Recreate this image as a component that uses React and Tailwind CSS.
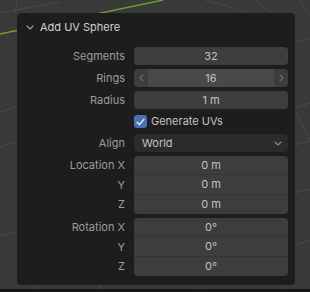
import { useState } from 'react'

const font = { fontFamily: 'Inter, "DejaVu Sans", sans-serif' }

function Chevron({ dir = 'down', className = '' }) {
  const d = {
    down: 'M1 1 L4 4 L7 1',
    left: 'M4 1 L1 4 L4 7',
    right: 'M1 1 L4 4 L1 7',
  }[dir]
  const size = dir === 'down' ? { w: 8, h: 5 } : { w: 5, h: 8 }
  return (
    <svg width={size.w} height={size.h} viewBox={`0 0 ${size.w} ${size.h}`} className={className}>
      <path d={d} fill="none" stroke="currentColor" strokeWidth="1.1" strokeLinecap="round" strokeLinejoin="round" />
    </svg>
  )
}

function Row({ label, children }) {
  return (
    <div className="grid grid-cols-[108px_1fr] items-center gap-[9px]">
      <span className="text-right text-[11px] text-[#9c9c9c]">{label}</span>
      {children}
    </div>
  )
}

function NumField({ value }) {
  return (
    <div className="flex h-[18px] items-center justify-center rounded-[4px] bg-[#3d3d3d] text-[11px] text-[#c2c2c2]">
      {value}
    </div>
  )
}

function Viewport() {
  const grid = [
    [0, 13, 60, 2],
    [17, 0, 15, 13],
    [0, 112, 17, 107],
    [0, 147, 17, 142],
    [0, 236, 17, 231],
    [205, 0, 250, 13],
    [255, 0, 272, 13],
    [300, 0, 310, 15],
    [295, 42, 310, 38],
    [295, 108, 310, 103],
    [296, 113, 310, 140],
    [295, 145, 310, 141],
    [295, 193, 310, 189],
    [295, 245, 310, 240],
    [38, 285, 38, 289],
    [100, 285, 100, 289],
    [200, 285, 200, 289],
    [285, 285, 285, 289],
  ]
  return (
    <svg className="absolute inset-0" width="310" height="292" viewBox="0 0 310 292">
      {grid.map(([x1, y1, x2, y2], i) => (
        <line key={i} x1={x1} y1={y1} x2={x2} y2={y2} stroke="#4a4a4a" strokeWidth="1" />
      ))}
      <line x1="0" y1="34" x2="163" y2="0" stroke="#6f9f2c" strokeWidth="1.3" />
      <rect x="0" y="289" width="310" height="3" fill="#171717" />
    </svg>
  )
}

function Stack({ labels, values }) {
  const heights = ['h-[19px]', 'h-[20px]', 'h-[19px]']
  return (
    <div className="grid grid-cols-[108px_1fr] gap-x-[9px]">
      <div className="flex flex-col text-[11px] text-[#9c9c9c]">
        {labels.map((l, i) => (
          <span key={l} className={`flex items-center justify-end ${heights[i]}`}>{l}</span>
        ))}
      </div>
      <div className="flex flex-col divide-y divide-[#343434] overflow-hidden rounded-[4px] bg-[#3d3d3d] text-[11px] text-[#c2c2c2]">
        {values.map((v, i) => (
          <span key={i} className={`flex items-center justify-center ${heights[i]}`}>{v}</span>
        ))}
      </div>
    </div>
  )
}

export default function App() {
  const [uvs, setUvs] = useState(true)

  return (
    <div className="relative h-[292px] w-[310px] overflow-hidden bg-[#393939]" style={font}>
      <Viewport />
      <div className="relative pl-[17px] pt-[13px]">
        <div className="h-[272px] w-[278px] rounded-[4px] bg-[#1d1d1d] pr-[7px]">
          <div className="flex h-[27px] items-center gap-[6px] pl-[9px] pt-[1px] text-[11px] text-[#d2d2d2]">
            <Chevron dir="down" className="text-[#a0a0a0]" />
            <span>Add UV Sphere</span>
          </div>

          <div className="mt-[7px] flex flex-col gap-[4px]">
            <Row label="Segments">
              <NumField value="32" />
            </Row>
            <Row label="Rings">
              <div className="flex h-[18px] items-center overflow-hidden rounded-[4px] bg-[#3d3d3d] text-[11px] text-[#c2c2c2]">
                <span className="flex h-full w-[14px] items-center justify-center text-[#6a6a6a]">
                  <Chevron dir="left" />
                </span>
                <span className="flex h-full flex-1 items-center justify-center bg-[#494949]">16</span>
                <span className="flex h-full w-[14px] items-center justify-center text-[#6a6a6a]">
                  <Chevron dir="right" />
                </span>
              </div>
            </Row>
            <Row label="Radius">
              <NumField value="1 m" />
            </Row>
          </div>

          <div className="mt-[5px] grid grid-cols-[108px_1fr] gap-[9px]">
            <span />
            <button type="button" onClick={() => setUvs(!uvs)} className="flex h-[15px] items-center gap-[4px] text-[11px] text-[#c2c2c2]">
              <span className="flex h-[13px] w-[13px] items-center justify-center rounded-[3px] bg-[#4772b3]">
                {uvs && (
                  <svg width="9" height="8" viewBox="0 0 9 8">
                    <path d="M1 4.2 L3.4 6.5 L8 1.2" fill="none" stroke="#e6e6e6" strokeWidth="1.4" strokeLinecap="round" strokeLinejoin="round" />
                  </svg>
                )}
              </span>
              <span>Generate UVs</span>
            </button>
          </div>

          <div className="mt-[5px]">
            <Row label="Align">
              <div className="flex h-[18px] items-center justify-between rounded-[4px] bg-[#2b2b2b] pl-[8px] pr-[6px] text-[11px] text-[#c2c2c2]">
                <span>World</span>
                <Chevron dir="down" className="text-[#8a8a8a]" />
              </div>
            </Row>
          </div>

          <div className="mt-[4px]">
            <Stack labels={['Location X', 'Y', 'Z']} values={['0 m', '0 m', '0 m']} />
          </div>
          <div className="mt-[4px]">
            <Stack labels={['Rotation X', 'Y', 'Z']} values={['0°', '0°', '0°']} />
          </div>
        </div>
      </div>
    </div>
  )
}
